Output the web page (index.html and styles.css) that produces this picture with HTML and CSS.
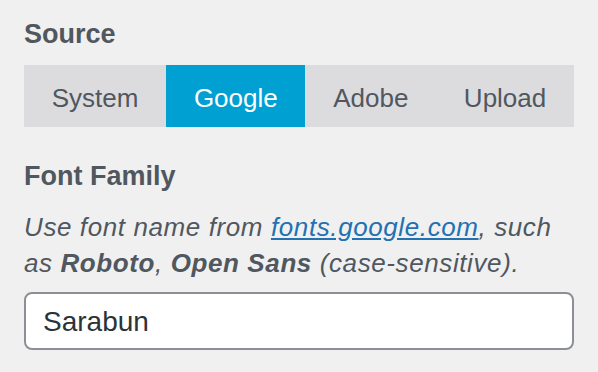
FILE: index.html
```html
<!DOCTYPE html>
<html lang="en">
<head>
<meta charset="utf-8">
<title>Font Source</title>
<link rel="stylesheet" href="styles.css">
</head>
<body>
<div class="panel">
  <h2 class="title title-source">Source</h2>
  <div class="segmented">
    <button class="seg">System</button>
    <button class="seg seg-active">Google</button>
    <button class="seg">Adobe</button>
    <button class="seg">Upload</button>
  </div>
  <h2 class="title title-family">Font Family</h2>
  <p class="desc">Use font name from <a href="#" class="link">fonts.google.com</a>, such as <strong>Roboto</strong>, <strong>Open Sans</strong> (case-sensitive).</p>
  <input class="field" type="text" value="Sarabun">
</div>
</body>
</html>
```

FILE: styles.css
```css
html, body {
  margin: 0;
  padding: 0;
  background: #f0f0f1;
}

body {
  font-family: "Liberation Sans", Arial, sans-serif;
  color: #50575e;
}

.panel {
  padding: 18px 24px 0 24px;
  display: flex;
  flex-direction: column;
}

.title {
  margin: 0;
  font-size: 27px;
  line-height: 32px;
  font-weight: 700;
  color: #50575e;
}

.title-family {
  margin-top: 33px;
}

.segmented {
  margin-top: 15px;
  display: flex;
  height: 62px;
  background: #dcdcde;
}

.seg {
  flex: 1 1 auto;
  border: 0;
  margin: 0;
  padding: 0 27px;
  background: #dcdcde;
  color: #50575e;
  font-family: "Liberation Sans", Arial, sans-serif;
  font-size: 26px;
  line-height: 62px;
  padding-top: 2px;
  cursor: pointer;
}

.seg-active {
  background: #00a0d2;
  color: #ffffff;
}

.desc {
  margin: 17px 0 0 0;
  font-size: 26px;
  letter-spacing: 0.6px;
  line-height: 36px;
  font-style: italic;
  color: #50575e;
}

.desc strong {
  font-weight: 700;
}

.link {
  color: #2271b1;
  text-decoration: underline;
}

.field {
  margin-top: 11px;
  box-sizing: border-box;
  width: 100%;
  height: 58px;
  border: 2px solid #8c8f94;
  border-radius: 8px;
  background: #ffffff;
  padding: 2px 16px 0 17px;
  font-family: "Liberation Sans", Arial, sans-serif;
  font-size: 28px;
  color: #2c3338;
  outline: none;
}
```
